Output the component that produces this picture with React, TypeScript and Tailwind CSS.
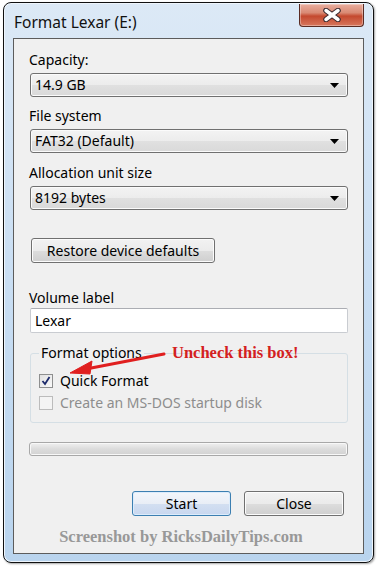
import React from 'react';

const ui = { fontFamily: '"Noto Sans", "Open Sans", Arial, sans-serif' };
const serif = { fontFamily: '"Liberation Serif", "Times New Roman", serif' };

const Combo: React.FC<{ value: string }> = ({ value }) => (
  <div className="mt-[5px] h-[24px] w-[318px] flex items-center justify-between rounded-[3px] border border-[#707070] bg-[linear-gradient(#f3f3f3_0%,#ececec_50%,#e0e0e0_51%,#d9d9d9_100%)] pl-[4px] pr-[8px] shadow-[inset_0_0_0_1px_#fbfbfb]">
    <span className="text-[14px] leading-[16px] text-black">{value}</span>
    <svg width="9" height="5" viewBox="0 0 9 5">
      <path d="M0 0 H9 L4.5 5 Z" fill="#000" />
    </svg>
  </div>
);

const Label: React.FC<{ text: string; className: string }> = ({ text, className }) => (
  <div className={`-ml-px h-[16px] text-[14px] leading-[16px] text-black ${className}`}>{text}</div>
);

export default function App() {
  return (
    <div className="relative w-[378px] h-[567px] bg-white overflow-hidden" style={ui}>
      {/* window */}
      <div className="absolute left-[3px] top-[2px] w-[371px] h-[561px] rounded-[8px] border-[1.5px] border-[#111] bg-linear-to-b from-[#dce9f6] via-[#c9def3] to-[#b9d4ee] shadow-[inset_0_0_0_1px_#eef5fc,1px_1px_2px_rgba(0,0,0,0.35)] flex flex-col">
        {/* title bar */}
        <div className="h-[35px] flex justify-between pl-[10px] pr-[9px]">
          <div className="mt-[10px] text-[15.5px] leading-[18px] text-[#111]">Format Lexar (E:)</div>
          <div className="mt-px h-[23px] w-[65px] rounded-b-[4px] border border-t-0 border-[#5a2b22] bg-[linear-gradient(#e9ae9f_0%,#d98a74_40%,#c4492f_55%,#d7775d_100%)] flex items-center justify-center shadow-[inset_0_0_0_1px_rgba(255,255,255,0.35)]">
            <svg width="22" height="14" viewBox="0 0 22 14">
              <path d="M5 2.5 L17 11.5 M17 2.5 L5 11.5" stroke="#3a2a30" strokeWidth="5.5" strokeLinecap="round" />
              <path d="M5 2.5 L17 11.5 M17 2.5 L5 11.5" stroke="#ffffff" strokeWidth="3.5" strokeLinecap="round" />
            </svg>
          </div>
        </div>

        {/* client area */}
        <div className="mx-[9px] h-[516px] border border-[#5c5c5c] bg-[#f0f0f0] px-[16px] flex flex-col">
          <Label text="Capacity:" className="mt-[13px]" />
          <Combo value="14.9 GB" />
          <Label text="File system" className="mt-[11px]" />
          <Combo value="FAT32 (Default)" />
          <Label text="Allocation unit size" className="mt-[12px]" />
          <Combo value="8192 bytes" />

          <button className="mt-[28px] ml-px h-[25px] w-[184px] rounded-[3px] border border-[#707070] bg-[linear-gradient(#f2f2f2_0%,#ebebeb_50%,#dddddd_51%,#cfcfcf_100%)] shadow-[inset_0_0_0_1px_#fcfcfc] text-[14px] leading-[16px] text-black">
            Restore device defaults
          </button>

          <Label text="Volume label" className="mt-[27px]" />
          <div className="mt-[2px] h-[25px] w-[318px] border border-[#c9ccd1] border-t-[#abadb3] bg-white rounded-[2px] pl-[4px] flex items-center text-[14px] leading-[16px] text-black">
            Lexar
          </div>

          {/* format options group */}
          <div className="relative mt-[20px] h-[70px] w-[318px] rounded-[3px] border border-[#d5dfe5] pl-[8px] pt-[19px] flex flex-col gap-[6px]">
            <span className="absolute left-[8px] -top-[9px] bg-[#f0f0f0] px-[2px] text-[14px] leading-[16px] text-black">
              Format options
            </span>
            <div className="flex items-center gap-[7px] h-[16px]">
              <div className="h-[14px] w-[14px] border border-[#8e8f8f] bg-linear-to-br from-[#e0e0e0] to-[#fafafa] flex items-center justify-center">
                <svg width="10" height="10" viewBox="0 0 10 10">
                  <path d="M1.5 5 L4 8 L8.5 1" fill="none" stroke="#1c2a6b" strokeWidth="1.8" />
                </svg>
              </div>
              <span className="text-[14px] leading-[16px] text-black">Quick Format</span>
            </div>
            <div className="flex items-center gap-[7px] h-[16px]">
              <div className="h-[14px] w-[14px] border border-[#bcbcbc] bg-[#f4f4f4]" />
              <span className="text-[14px] leading-[16px] text-[#8d8d8d]">Create an MS-DOS startup disk</span>
            </div>
          </div>

          {/* progress */}
          <div className="mt-[19px] -ml-px h-[14px] w-[319px] rounded-[3px] border border-[#a8a8a8] bg-[linear-gradient(#f0f0f0_0%,#dcdcdc_50%,#d2d2d2_100%)] shadow-[inset_0_0_0_1px_#f8f8f8]" />

          {/* buttons */}
          <div className="mt-[35px] flex justify-end gap-[13px] pr-[3px]">
            <button className="h-[25px] w-[99px] rounded-[3px] border border-[#3c7fb1] bg-[linear-gradient(#f3f6fb_0%,#e9eef6_50%,#d3dff1_51%,#c8d7ef_100%)] shadow-[inset_0_0_0_1px_#dcecfc] text-[14px] leading-[16px] text-black">
              Start
            </button>
            <button className="h-[25px] w-[100px] rounded-[3px] border border-[#707070] bg-[linear-gradient(#f2f2f2_0%,#ebebeb_50%,#dddddd_51%,#cfcfcf_100%)] shadow-[inset_0_0_0_1px_#fcfcfc] text-[14px] leading-[16px] text-black">
              Close
            </button>
          </div>

          <div className="mt-[11px] h-[19px] pr-[15px] text-center text-[16.5px] leading-[19px] font-bold text-[#989898]" style={serif}>
            Screenshot by RicksDailyTips.com
          </div>
        </div>
      </div>

      {/* annotation */}
      <div className="absolute left-[172px] top-[343px] text-[16.5px] leading-[19px] font-bold text-[#d42020]" style={serif}>
        Uncheck this box!
      </div>
      <svg className="absolute left-0 top-0" width="378" height="567" viewBox="0 0 378 567">
        <path d="M164 354 L86 369" stroke="#e01f1f" strokeWidth="3" strokeLinecap="round" />
        <path d="M70 373 L92 361 L90 374 Z" fill="#e01f1f" stroke="#e01f1f" strokeWidth="1" strokeLinejoin="round" />
      </svg>
    </div>
  );
}
